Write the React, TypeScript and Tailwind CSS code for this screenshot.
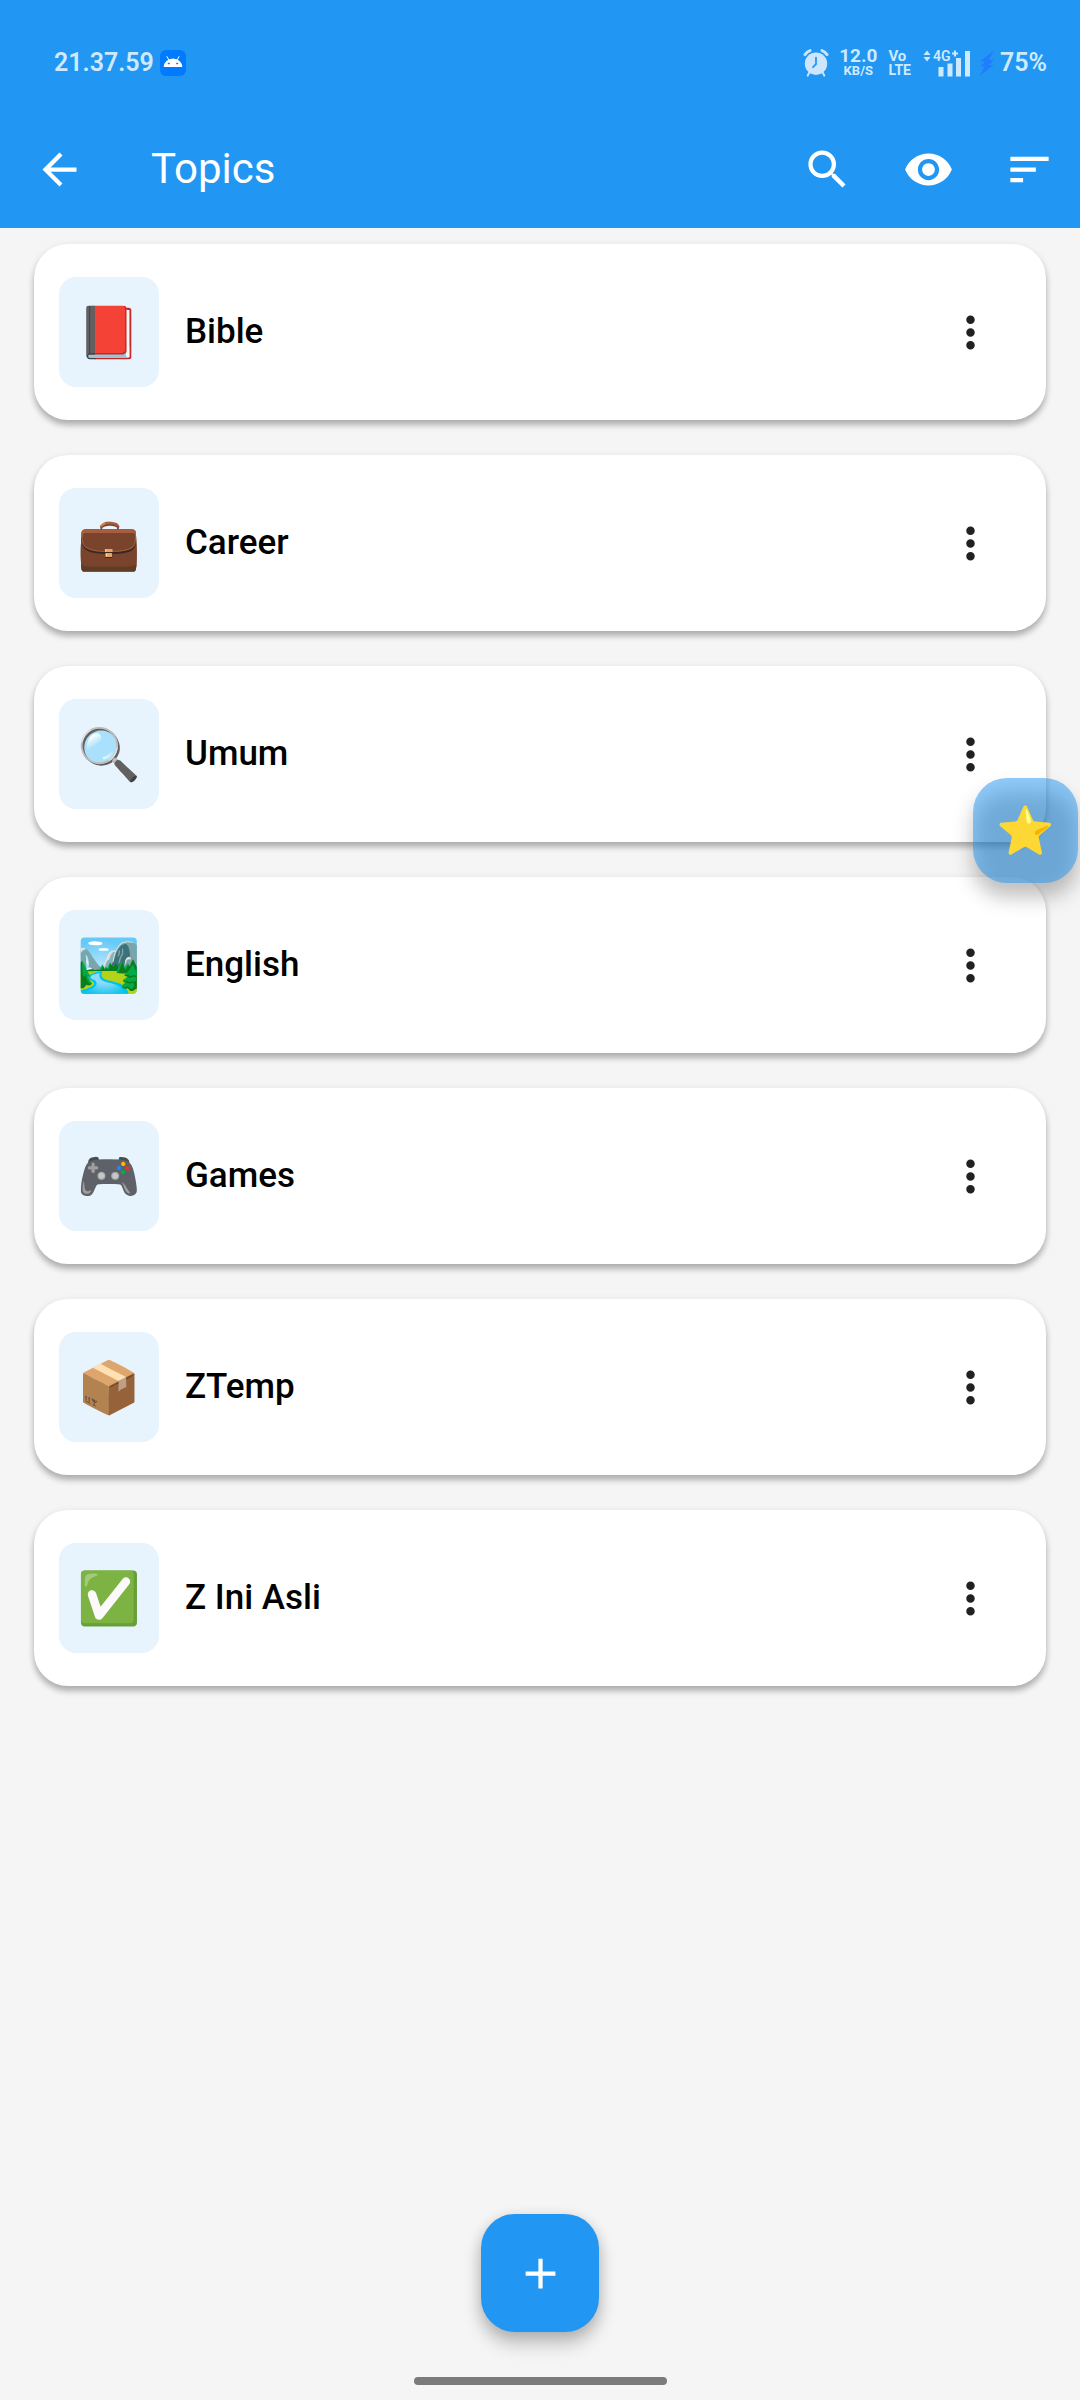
import React from "react";
import { MdAdd, MdArrowBack, MdMoreVert, MdSearch, MdSort, MdVisibility } from "react-icons/md";

const topics = [
  { name: "Bible", icon: "📕" },
  { name: "Career", icon: "💼" },
  { name: "Umum", icon: "🔍" },
  { name: "English", icon: "🏞️" },
  { name: "Games", icon: "🎮" },
  { name: "ZTemp", icon: "📦" },
  { name: "Z Ini Asli", icon: "✅" },
];

function AndroidBadge() {
  return (
    <svg viewBox="0 0 26 26" className="size-[26px]" aria-hidden="true">
      <rect width="26" height="26" rx="6" fill="#007bff" />
      <path d="M3.7 17a9.3 8.6 0 0 1 18.6 0z" fill="#fff" />
      <path d="M7 6.6l2 3.6M19 6.6l-2 3.6" stroke="#fff" strokeWidth="1" strokeLinecap="round" />
      <rect x="7.8" y="12.8" width="2" height="1.4" fill="#2a6fd0" />
      <rect x="16.2" y="12.8" width="2" height="1.4" fill="#2a6fd0" />
    </svg>
  );
}

function AlarmIcon() {
  return (
    <svg viewBox="0 0 26 28" className="h-[28px] w-[26px]" fill="none" aria-hidden="true">
      <circle cx="13" cy="14.7" r="11.2" fill="#cbe6fd" />
      <path d="M2 5.6Q4 2.4 7 1.6M24 5.6Q22 2.4 19 1.6" stroke="#cbe6fd" strokeWidth="3" strokeLinecap="round" />
      <path d="M6.5 23l-1.8 3.6M19.5 23l1.8 3.6" stroke="#cbe6fd" strokeWidth="2" strokeLinecap="round" />
      <path d="M13 8.6v6.6l-3 3" stroke="#2196f3" strokeWidth="1.8" strokeLinecap="round" />
    </svg>
  );
}

function StatusBar() {
  return (
    <div className="flex h-[110px] items-center pr-[33px] pl-[54px] pt-[16px] text-[25px] font-semibold text-[#cdeaff]">
      <span>21.37.59</span>
      <span className="ml-[6px]">
        <AndroidBadge />
      </span>
      <div className="ml-auto flex items-center">
        <AlarmIcon />
        <div className="ml-[10px] flex flex-col items-center font-bold">
          <span className="text-[19px] leading-[15px]">12.0</span>
          <span className="text-[13px] leading-[15px]">KB/S</span>
        </div>
        <div className="ml-[11px] flex flex-col font-bold">
          <span className="text-[15px] leading-[14px]">Vo</span>
          <span className="text-[14px] leading-[14px]">LTE</span>
        </div>
        <div className="relative ml-[12px] h-[28px] w-[48px]">
          <svg viewBox="0 0 48 28" className="size-full" fill="#cdeaff" aria-hidden="true">
            <path d="M0.5 6L4 1.5 7.5 6zM0.5 8L4 12.5 7.5 8z" />
            <path d="M29 4.5h6M32 1.5v6" stroke="#cdeaff" strokeWidth="2" />
            <rect x="15.5" y="18" width="5" height="9.5" />
            <rect x="24.5" y="14.5" width="5" height="13" />
            <rect x="33" y="9" width="5" height="18.5" />
            <rect x="42" y="2" width="5" height="25.5" />
          </svg>
          <span className="absolute top-0 left-[10px] text-[14px] leading-[14px]">4G</span>
        </div>
        <svg viewBox="0 0 16 26" className="ml-[8px] h-[26px] w-[16px]" aria-hidden="true">
          <path d="M14.5 1L1 11.5h5L1.5 16.5h4L1 25.5 14.5 15H10l4.5-5H10z" fill="#1f7dff" />
        </svg>
        <span className="ml-[5px]">75%</span>
      </div>
    </div>
  );
}

function BarButton({ label, children }: { label: string; children: React.ReactNode }) {
  return (
    <button type="button" aria-label={label} className="flex h-[101px] w-[101px] items-center justify-center text-[51px]">
      {children}
    </button>
  );
}

function TopicCard({ name, icon }: { name: string; icon: string }) {
  return (
    <li className="flex items-center rounded-[34px] bg-white py-[33px] pr-[25px] pl-[25px] shadow-[0_5px_6px_rgba(0,0,0,0.27),0_1px_8px_rgba(0,0,0,0.06)]">
      <span className="flex h-[110px] w-[100px] items-center justify-center rounded-[17px] bg-[#e7f4fe] font-['Noto_Color_Emoji'] text-[51px] leading-none">
        {icon}
      </span>
      <h2 className="ml-[26px] flex-1 text-[35px] leading-[42px] font-medium text-black">{name}</h2>
      <button
        type="button"
        aria-label={`Options for ${name}`}
        className="flex size-[101px] items-center justify-center text-[51px] text-[#212121]"
      >
        <MdMoreVert />
      </button>
    </li>
  );
}

export default function App() {
  return (
    <div className="relative flex min-h-screen flex-col overflow-hidden bg-[#f5f5f5] font-[Roboto,sans-serif]">
      <header className="bg-[#2196f3] text-white">
        <StatusBar />
        <nav className="flex h-[118px] items-center">
          <button type="button" aria-label="Back" className="flex h-[101px] w-[118px] items-center justify-center text-[51px]">
            <MdArrowBack />
          </button>
          <h1 className="ml-[33px] flex-1 text-[42px] leading-[48px]">Topics</h1>
          <BarButton label="Search"><MdSearch /></BarButton>
          <BarButton label="Show or hide"><MdVisibility /></BarButton>
          <BarButton label="Sort"><MdSort /></BarButton>
        </nav>
      </header>

      <main className="flex-1">
        <ul className="flex flex-col gap-[35px] px-[34px] pt-4">
          {topics.map((t) => (
            <TopicCard key={t.name} name={t.name} icon={t.icon} />
          ))}
        </ul>
      </main>

      <div className="absolute top-[778px] right-[2px] size-[105px]">
        <span className="absolute inset-x-0 top-[14px] h-full rounded-[34px] bg-black/25 blur-[10px]" />
        <button
          type="button"
          aria-label="Favourites"
          className="relative flex size-full items-center justify-center rounded-[34px] bg-[#2196f3]/50 font-['Noto_Color_Emoji'] text-[47px] leading-none"
        >
          ⭐
        </button>
      </div>

      <footer className="flex flex-col items-center pb-[15px]">
        <button
          type="button"
          aria-label="Add topic"
          className="flex size-[118px] items-center justify-center rounded-[34px] bg-[#2196f3] text-[51px] text-white shadow-[0_12px_18px_rgba(0,0,0,0.22),0_2px_14px_rgba(0,0,0,0.12)]"
        >
          <MdAdd />
        </button>
        <div className="mt-[45px] h-2 w-[253px] rounded-full bg-[#7b7b7b]" />
      </footer>
    </div>
  );
}
